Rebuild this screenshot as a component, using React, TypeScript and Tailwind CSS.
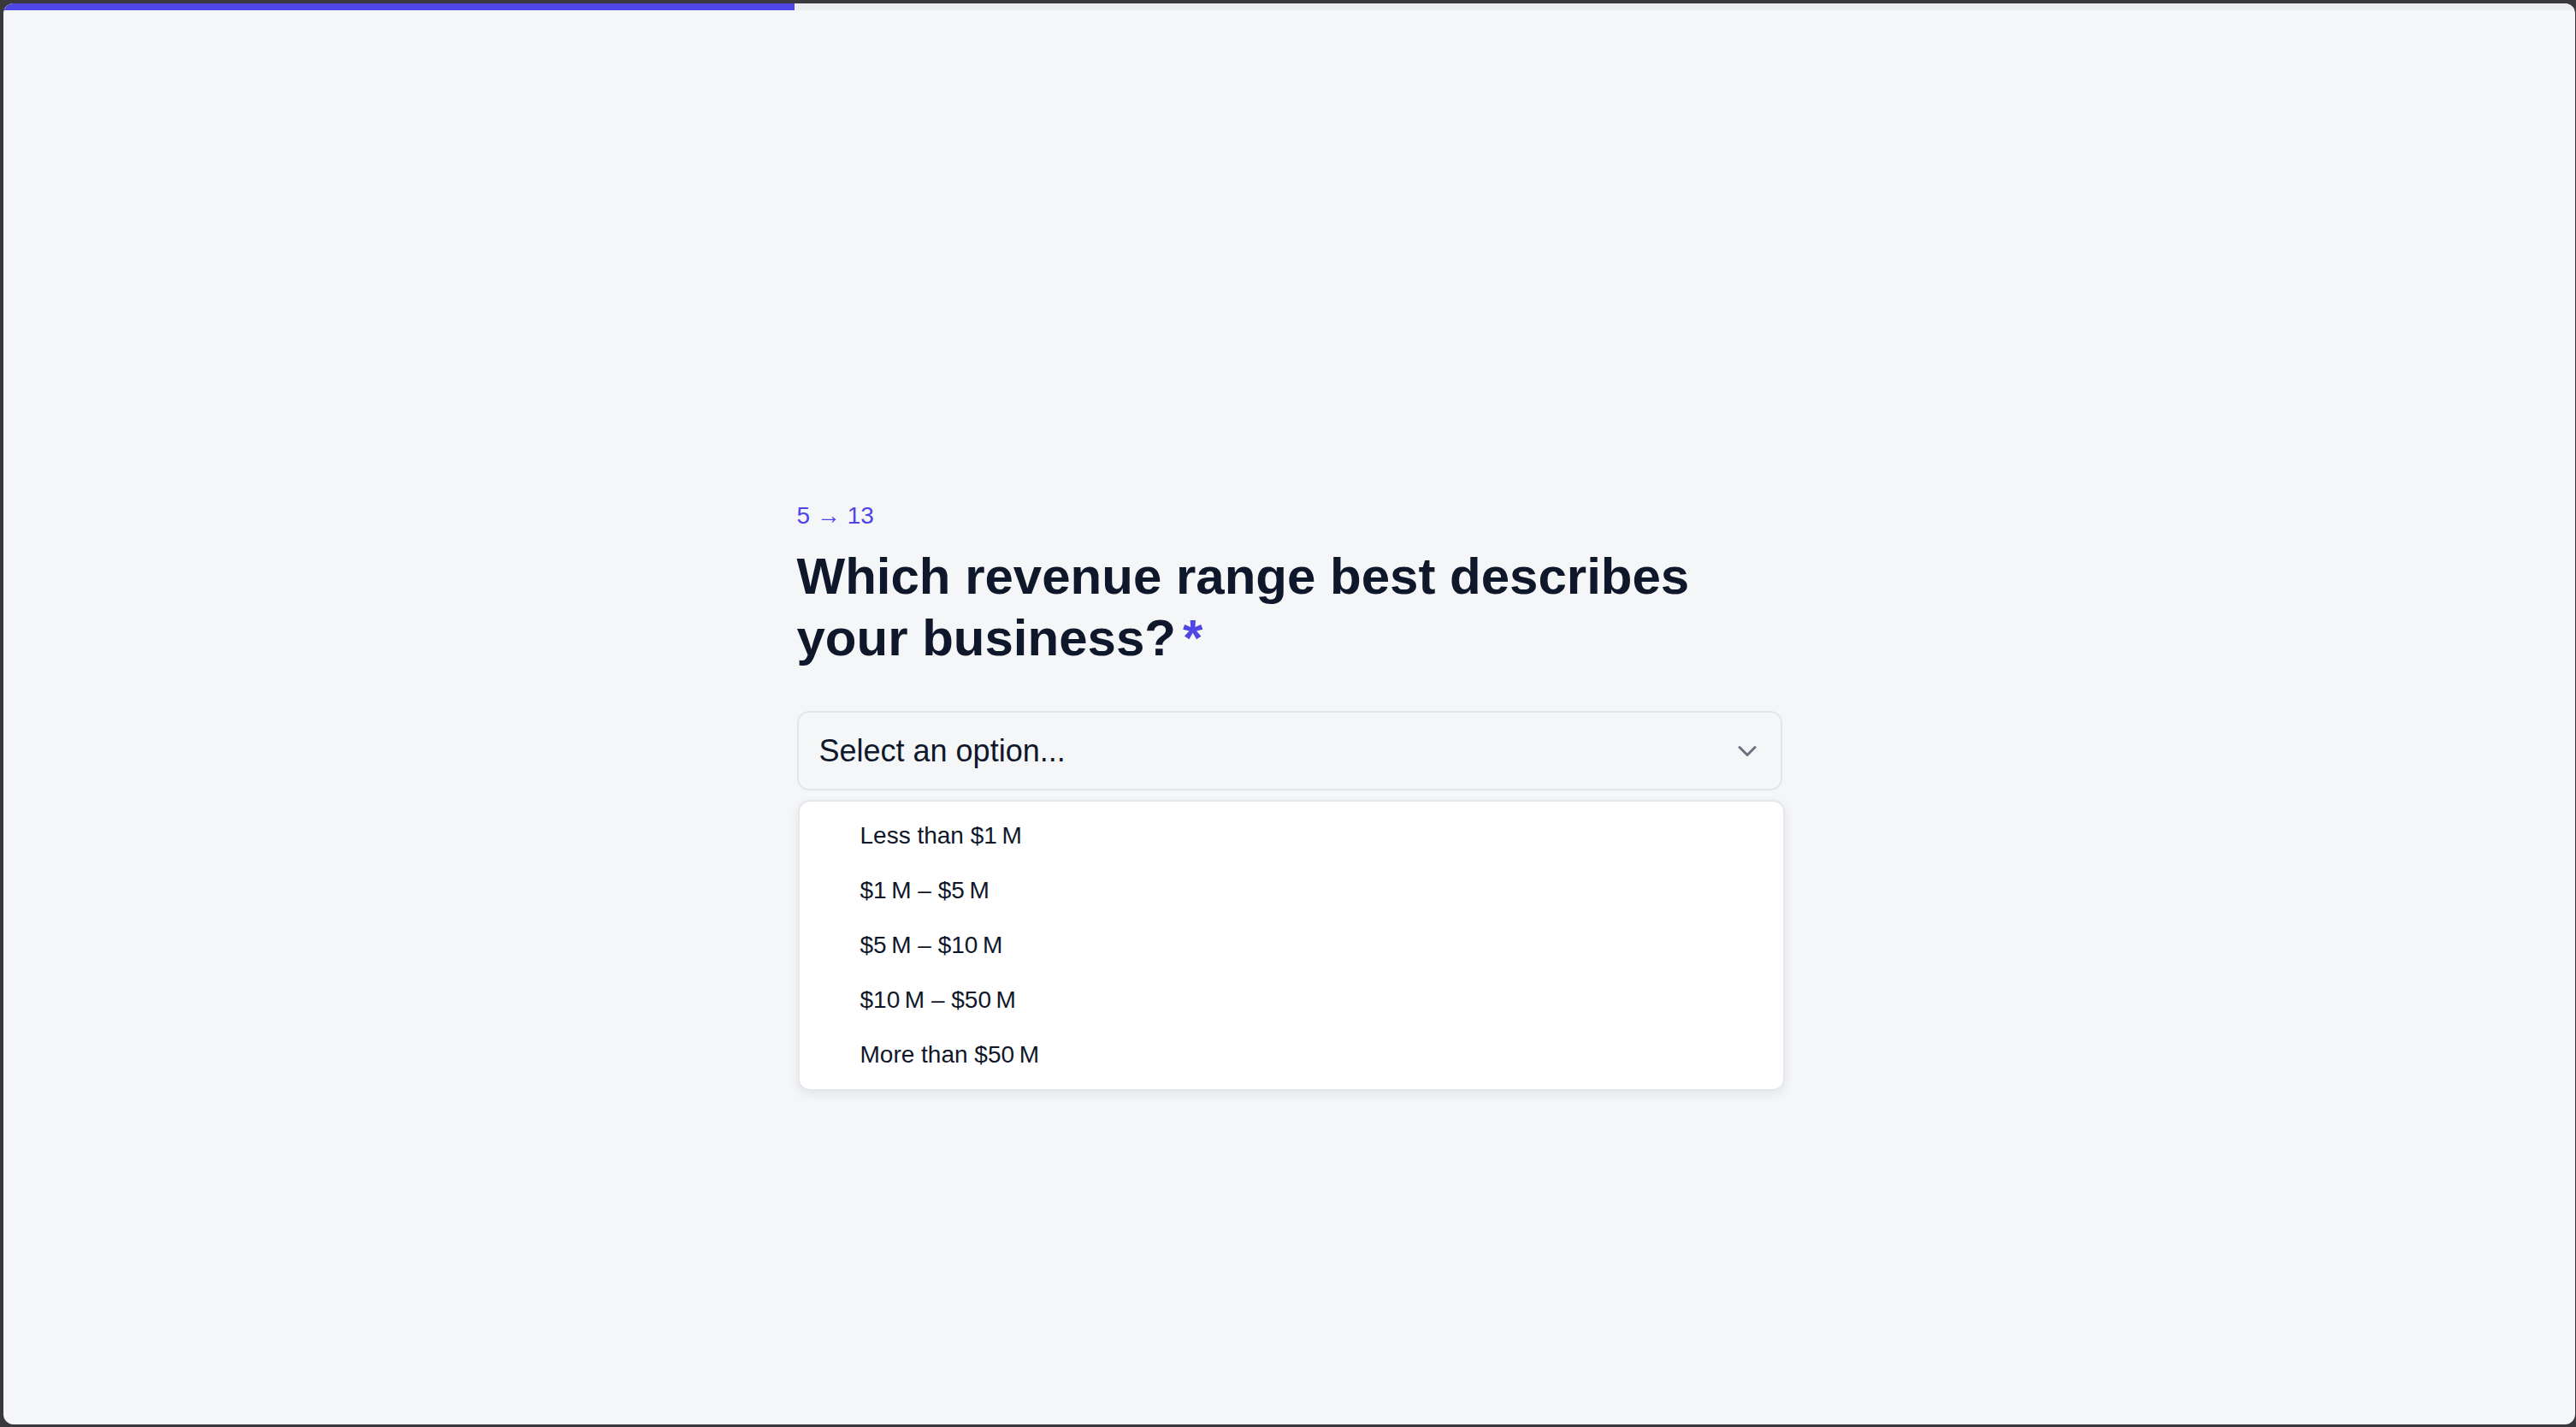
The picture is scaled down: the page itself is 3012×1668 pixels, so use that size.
import { ChevronDown } from "lucide-react";

const options = [
  "Less than $1\u2009M",
  "$1\u2009M – $5\u2009M",
  "$5\u2009M – $10\u2009M",
  "$10\u2009M – $50\u2009M",
  "More than $50\u2009M",
];

const step = 5;
const total = 13;

export default function App() {
  // Progress shows the questions already answered.
  const progress = ((step - 1) / total) * 100;

  return (
    <div className="h-screen bg-[#39383d] pt-[4px] pl-[4px] pb-[3px] pr-[1px] font-['Liberation_Sans',Arial,sans-serif]">
      <div className="h-full rounded-[12px] bg-[#f5f6f8] overflow-hidden flex flex-col">
        <div className="h-[8px] bg-[#ebecf0] shrink-0">
          <div className="h-full bg-[#4f46e5]" style={{ width: `${progress}%` }} />
        </div>

        <div className="w-[1152px] mx-auto mt-[570px]">
          <div className="text-[28px] leading-[42px] text-[#4f46e5] mb-[14px]">
            {step} → {total}
          </div>
          <h1 className="text-[60px] leading-[72px] font-bold text-[#0f172a]">
            Which revenue range best describes your business?<span className="ml-[8px] text-[#4f46e5]">*</span>
          </h1>

          <div className="mt-[49px] h-[93px] border-2 border-[#e3e5e9] rounded-[14px] bg-[#f5f6f8] flex items-center justify-between pl-[24px] pr-[21px]">
            <span className="text-[36px] text-[#0f172a]">Select an option...</span>
            <ChevronDown size={36} strokeWidth={2} className="text-[#6b7280]" />
          </div>

          <div className="mt-[11px] ml-[1px] -mr-[3px] bg-white border-2 border-[#e5e7eb] rounded-[14px] py-[8px] shadow-[0_4px_12px_rgba(15,23,42,0.08)]">
            {options.map((option) => (
              <div key={option} className="h-[64px] flex items-center pl-[71px] text-[28px] text-[#0f172a]">
                {option}
              </div>
            ))}
          </div>
        </div>
      </div>
    </div>
  );
}
